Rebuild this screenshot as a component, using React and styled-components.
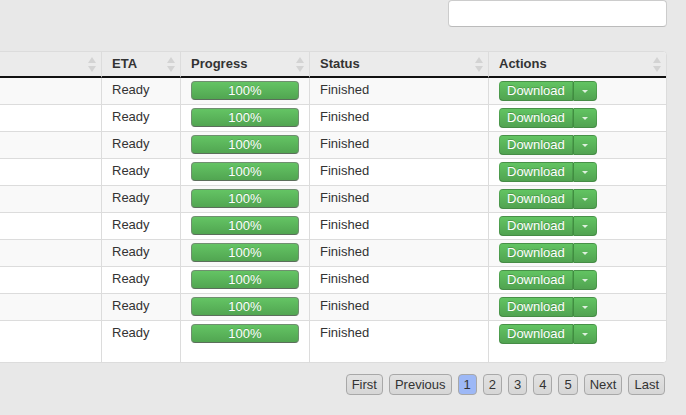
import React from 'react';
import styled, { createGlobalStyle } from 'styled-components';

const GlobalStyle = createGlobalStyle`
  html, body {
    margin: 0;
    background: #e8e8e8;
    font-family: 'Liberation Sans', Arial, sans-serif;
    color: #333;
  }
`;

const Page = styled.div`
  padding: 0 19px 0 0;
  height: 415px;
  box-sizing: border-box;
  overflow: hidden;
`;

const TopBar = styled.div`
  display: flex;
  justify-content: flex-end;
`;

const SearchInput = styled.input`
  width: 219px;
  height: 27px;
  box-sizing: border-box;
  border: 1px solid #ccc;
  border-bottom-color: #bbb;
  border-radius: 4px;
  background: #fff;
  outline: none;
`;

// the table runs off the left edge of the window, so its first column is cut
const TableFrame = styled.div`
  margin: 24px 0 0 -200px;
  width: 867px;
  box-sizing: border-box;
  border: 1px solid #dcdcdc;
  border-radius: 4px;
  overflow: hidden;
  background: #fff;
`;

const Table = styled.table`
  width: 100%;
  table-layout: fixed;
  border-collapse: separate;
  border-spacing: 0;
  font-size: 13px;
`;

const HeadCell = styled.th`
  width: ${(props) => props.$width}px;
  box-sizing: border-box;
  height: 26px;
  padding: 0 5px 0 10px;
  background: #ebebeb;
  border-bottom: 2px solid #111;
  text-align: left;
  font-weight: bold;
  color: #333;
  line-height: 18px;
  & + & {
    border-left: 1px solid #dcdcdc;
  }
`;

const HeadInner = styled.div`
  display: flex;
  justify-content: space-between;
  align-items: center;
`;

const Row = styled.tr`
  background: ${(props) => (props.$odd ? '#f9f9f9' : '#fff')};
`;

const Cell = styled.td`
  box-sizing: border-box;
  height: ${(props) => (props.$first ? 26 : 27) + (props.$last ? 15 : 0)}px;
  padding: 3px 10px 0;
  vertical-align: top;
  line-height: 18px;
  white-space: nowrap;
  border-top: ${(props) => (props.$first ? 'none' : '1px solid #dcdcdc')};
  & + & {
    border-left: 1px solid #dcdcdc;
  }
`;

const ProgressBar = styled.div`
  height: 19px;
  box-sizing: border-box;
  border: 1px solid #6f8f6f;
  border-bottom-color: #5b6e5b;
  border-radius: 4px;
  background: linear-gradient(#64c464, #51a551);
  color: #fff;
  text-align: center;
  font-size: 13px;
  line-height: 17px;
  text-shadow: 0 -1px 0 rgba(0, 0, 0, 0.15);
`;

const ButtonGroup = styled.div`
  display: inline-flex;
  height: 20px;
`;

const GreenButton = styled.button`
  display: flex;
  align-items: center;
  justify-content: center;
  box-sizing: border-box;
  height: 20px;
  margin: 0;
  padding: ${(props) => (props.$caret ? '0' : '0 7px')};
  width: ${(props) => (props.$caret ? '24px' : 'auto')};
  border: 1px solid rgba(0, 0, 0, 0.12);
  border-bottom-color: rgba(0, 0, 0, 0.28);
  border-left: ${(props) => (props.$caret ? '1px solid #3f8f3f' : '1px solid rgba(0, 0, 0, 0.12)')};
  border-radius: ${(props) => (props.$caret ? '0 4px 4px 0' : '4px 0 0 4px')};
  background: linear-gradient(#62c462, #51a351);
  color: #fff;
  font-family: 'Liberation Sans', Arial, sans-serif;
  font-size: 13px;
  line-height: 18px;
  text-shadow: 0 -1px 0 rgba(0, 0, 0, 0.2);
  cursor: pointer;
`;

const Caret = styled.span`
  width: 0;
  height: 0;
  border-left: 3px solid transparent;
  border-right: 3px solid transparent;
  border-top: 3px solid rgba(255, 255, 255, 0.8);
`;

const Pager = styled.div`
  display: flex;
  justify-content: flex-end;
  gap: 6px;
  margin-top: 11px;
  padding-right: 2px;
`;

const PageButton = styled.button`
  height: 21px;
  min-width: 19px;
  box-sizing: border-box;
  margin: 0;
  padding: 0 5px;
  border: 1px solid #a8a8a8;
  border-radius: 4px;
  background: ${(props) => (props.$active ? '#9db8f6' : 'linear-gradient(#e2e2e2, #d6d6d6)')};
  color: #333;
  font-family: 'Liberation Sans', Arial, sans-serif;
  font-size: 13px;
  line-height: 19px;
  cursor: pointer;
`;

const SortIcon = () => (
  <svg width="8" height="15" viewBox="0 0 8 15">
    <path d="M0 6 L4 0 L8 6 Z" fill="#d3d3d3" />
    <path d="M0 9 L8 9 L4 15 Z" fill="#d3d3d3" />
  </svg>
);

// first column is off screen, its label is not visible
const columns = [
  { key: 'name', label: '', width: 300 },
  { key: 'eta', label: 'ETA', width: 79 },
  { key: 'progress', label: 'Progress', width: 129 },
  { key: 'status', label: 'Status', width: 179 },
  { key: 'actions', label: 'Actions', width: 178 },
];

const rows = Array.from({ length: 10 }, (_, i) => ({
  id: i + 1,
  eta: 'Ready',
  progress: 100,
  status: 'Finished',
}));

const pages = ['First', 'Previous', '1', '2', '3', '4', '5', 'Next', 'Last'];

const App = () => (
  <Page>
    <GlobalStyle />
    <TopBar>
      <SearchInput type="text" />
    </TopBar>
    <TableFrame>
      <Table>
        <thead>
          <tr>
            {columns.map((col) => (
              <HeadCell key={col.key} $width={col.width}>
                <HeadInner>
                  <span>{col.label}</span>
                  <SortIcon />
                </HeadInner>
              </HeadCell>
            ))}
          </tr>
        </thead>
        <tbody>
          {rows.map((row, i) => {
            const first = i === 0;
            const last = i === rows.length - 1;
            return (
              <Row key={row.id} $odd={i % 2 === 0}>
                <Cell $first={first} $last={last} />
                <Cell $first={first} $last={last}>{row.eta}</Cell>
                <Cell $first={first} $last={last}>
                  <ProgressBar>{row.progress}%</ProgressBar>
                </Cell>
                <Cell $first={first} $last={last}>{row.status}</Cell>
                <Cell $first={first} $last={last}>
                  <ButtonGroup>
                    <GreenButton>Download</GreenButton>
                    <GreenButton $caret>
                      <Caret />
                    </GreenButton>
                  </ButtonGroup>
                </Cell>
              </Row>
            );
          })}
        </tbody>
      </Table>
    </TableFrame>
    <Pager>
      {pages.map((p) => (
        <PageButton key={p} $active={p === '1'}>{p}</PageButton>
      ))}
    </Pager>
  </Page>
);

export default App;
